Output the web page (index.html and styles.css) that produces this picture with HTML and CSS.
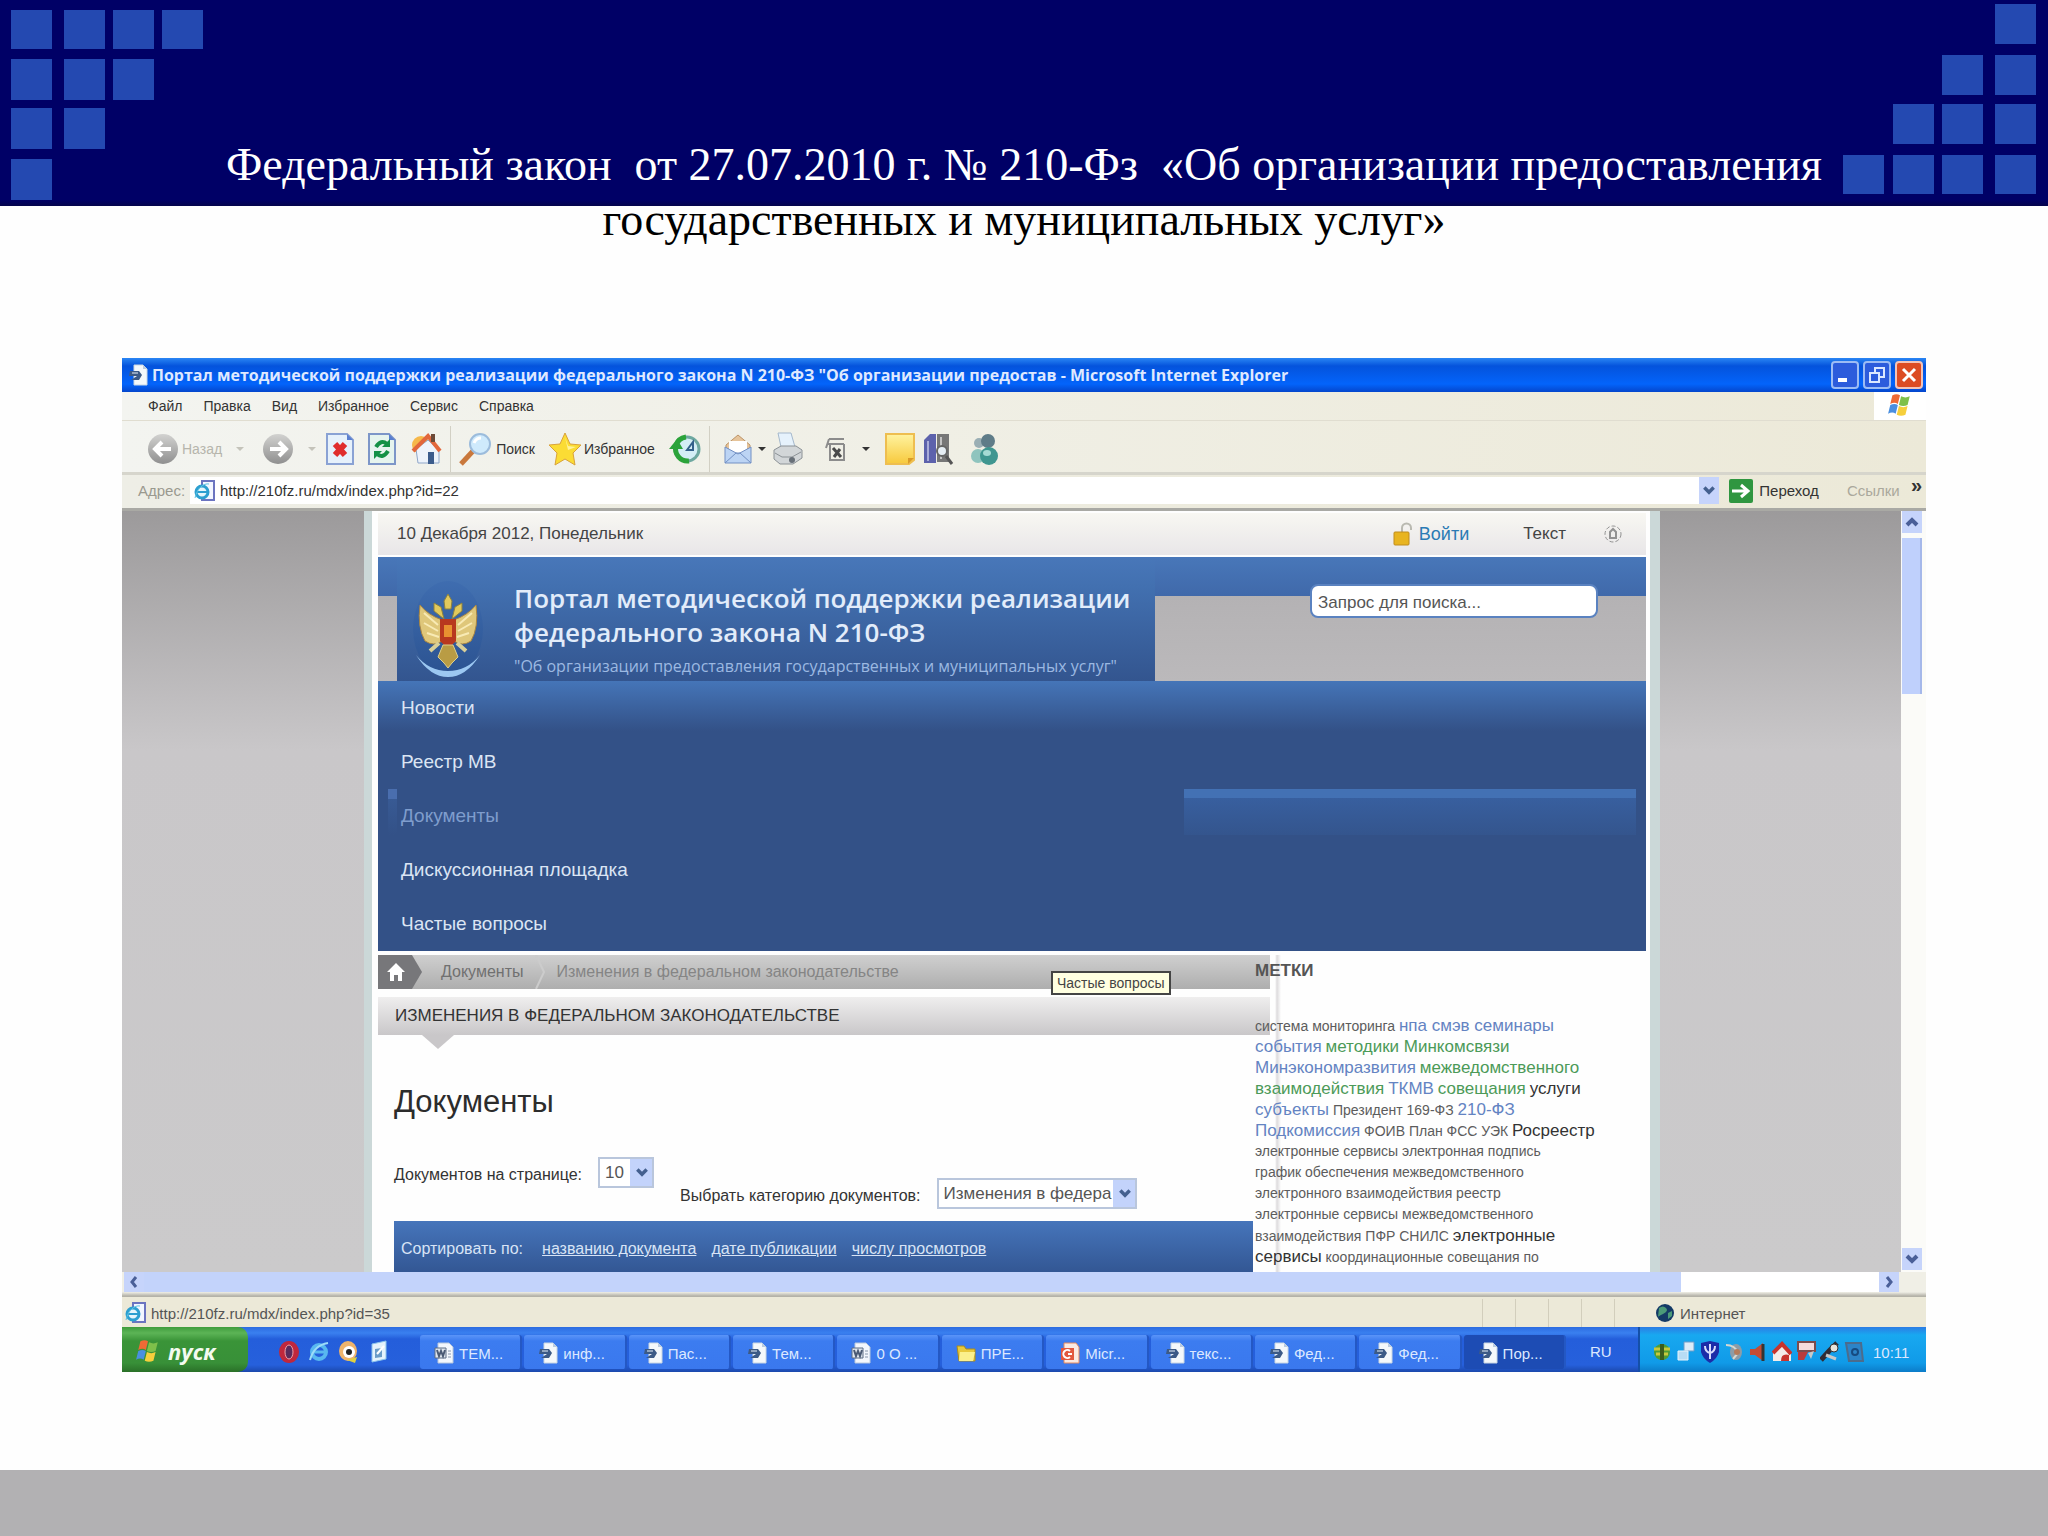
FILE: index.html
```html
<!DOCTYPE html>
<html lang="ru">
<head>
<meta charset="utf-8">
<title>Федеральный закон от 27.07.2010 г. № 210-Фз</title>
<link rel="stylesheet" href="styles.css">
</head>
<body>
<svg class="defs" width="0" height="0" aria-hidden="true">
  <defs>
    <linearGradient id="gloss" x1="0" y1="0" x2="0" y2="1"><stop offset="0" stop-color="#d2d2d0"/><stop offset="1" stop-color="#8f8f8f"/></linearGradient>
    <linearGradient id="noteFill" x1="0" y1="0" x2="0" y2="1"><stop offset="0" stop-color="#fff3a0"/><stop offset="1" stop-color="#f7c93c"/></linearGradient>
    <linearGradient id="sphere" x1="0" y1="0" x2="0" y2="1"><stop offset="0" stop-color="#3f6db0"/><stop offset="1" stop-color="#2b5290"/></linearGradient>
    <symbol id="ie-doc" viewBox="0 0 20 22"><path d="M6 1h9l4 4v16H6z" fill="#f4f8fb" stroke="#c9d6e2"/><path d="M15 1v4h4" fill="#b9cbe0"/><path d="M2 7l9 0 3 4-3 5H3l6-4H1z" fill="#3c5a86"/><path d="M4 9h6" stroke="#e4eef8" stroke-width="1"/></symbol>
    <symbol id="ie-page" viewBox="0 0 22 22"><path d="M8 1h12v19H8z" fill="#f2f6ff" stroke="#6b74c0" stroke-width="2"/><circle cx="8" cy="12" r="6" fill="#e6f6fc" stroke="#2c9fd0" stroke-width="3"/><path d="M3 12h10" stroke="#2c9fd0" stroke-width="2"/><path d="M1 18C3 8 10 3 15 4" fill="none" stroke="#5fc4e4" stroke-width="1"/></symbol>
    <symbol id="word" viewBox="0 0 20 22"><path d="M4 1h11l4 4v16H4z" fill="#f3f7fd" stroke="#b9c8dc"/><path d="M1 6h11v10H1z" fill="#dfe6ee" stroke="#5c6c84"/><path d="M3 8l2 6 2-5 2 5 2-6" fill="none" stroke="#4a5a74" stroke-width="2"/><path d="M14 9h3M14 12h3M14 15h3" stroke="#8695aa"/></symbol>
    <symbol id="folder" viewBox="0 0 20 22"><path d="M1 4h7l2 3h9v12H3z" fill="#e8c93c" stroke="#a98c1c"/><path d="M4 10h15l-2 9H3z" fill="#fbf08c"/></symbol>
    <symbol id="ppt" viewBox="0 0 20 22"><path d="M4 1h12l3 4v16H4z" fill="#fbe9e2" stroke="#e3895f"/><path d="M1 6h13v12H1z" fill="#e2583f"/><path d="M10 9a4 4 0 1 0 0 6M8 12h4" fill="none" stroke="#fff" stroke-width="2"/></symbol>
    <symbol id="flag" viewBox="0 0 24 24"><path d="M5 3q4-2 7 0l-2 8q-3-2-7 0z" fill="#ee6a35"/><path d="M13 4q4 2 8 0l-2 8q-4 2-8 0z" fill="#7ec04a"/><path d="M3 12q4-2 7 0l-2 8q-3-2-7 0z" fill="#4a8fe0"/><path d="M11 13q4 2 8 0l-2 8q-4 2-8 0z" fill="#f6cf3c"/></symbol>
    <symbol id="down" viewBox="0 0 12 12"><path d="M2 3l4 4 4-4" fill="none" stroke="#44608f" stroke-width="3"/></symbol>
  </defs>
</svg>

<header class="slide-head">
  <svg class="squares squares-left" width="204" height="206" fill="#2449b1" aria-hidden="true">
    <path d="M11 10h41v39H11zM64 10h41v39H64zM113 10h41v39H113zM162 10h41v39H162zM11 59h41v41H11zM64 59h41v41H64zM113 59h41v41H113zM11 108h41v41H11zM64 108h41v41H64zM11 159h41v41H11z"/>
  </svg>
  <svg class="squares squares-right" width="206" height="206" fill="#2449b1" aria-hidden="true">
    <path d="M153 4h41v40h-41zM100 55h41v40h-41zM153 55h41v40h-41zM51 104h41v40H51zM100 104h41v40h-41zM153 104h41v40h-41zM1 155h41v39H1zM51 155h41v39H51zM100 155h41v39h-41zM153 155h41v39h-41z"/>
  </svg>
  <h1><span class="line-light">Федеральный закон&nbsp; от 27.07.2010 г. № 210-Фз&nbsp; «Об организации предоставления</span> <span class="line-dark">государственных и муниципальных услуг»</span></h1>
</header>

<main class="slide-body">
<div class="window">
  <div class="titlebar">
    <svg width="20" height="22"><use href="#ie-doc"/></svg>
    <span class="title-text">Портал методической поддержки реализации федерального закона N 210-ФЗ "Об организации предостав - Microsoft Internet Explorer</span>
    <button class="wbtn" type="button" aria-label="Свернуть"><svg width="24" height="24"><path d="M5 17h9" stroke="#fff" stroke-width="4"/></svg></button>
    <button class="wbtn" type="button" aria-label="Восстановить"><svg width="24" height="24" fill="none" stroke="#dbe8ff" stroke-width="2"><path d="M10 9V5h9v9h-4"/><path d="M5 10h9v9H5z"/></svg></button>
    <button class="wbtn close" type="button" aria-label="Закрыть"><svg width="24" height="24"><path d="M6 6l12 12M18 6L6 18" stroke="#fff" stroke-width="3"/></svg></button>
  </div>

  <nav class="menubar">
    <a href="#">Файл</a><a href="#">Правка</a><a href="#">Вид</a><a href="#">Избранное</a><a href="#">Сервис</a><a href="#">Справка</a>
    <span class="throbber"><svg width="28" height="26"><use href="#flag"/></svg></span>
  </nav>

  <div class="toolbar">
    <button class="tool muted" type="button"><svg width="32" height="32"><circle cx="16" cy="16" r="15" fill="url(#gloss)"/><path d="M24 16H9M15 9l-7 7 7 7" fill="none" stroke="#fff" stroke-width="4"/></svg>Назад</button>
    <span class="caret pale"></span>
    <button class="tool fwd" type="button" aria-label="Вперед"><svg width="32" height="32"><circle cx="16" cy="16" r="15" fill="url(#gloss)"/><path d="M8 16h15M17 9l7 7-7 7" fill="none" stroke="#fff" stroke-width="4"/></svg></button>
    <span class="caret pale"></span>
    <button class="tool stop" type="button" aria-label="Остановить"><svg width="28" height="32"><path d="M1 1h20l6 6v24H1z" fill="#e6f1fb" stroke="#8aa2d4" stroke-width="2"/><path d="M21 1v6h6z" fill="#5a7fd0"/><path d="M9 11l10 11M19 11L9 22" stroke="#e02d2d" stroke-width="6"/></svg></button>
    <button class="tool" type="button" aria-label="Обновить"><svg width="28" height="32"><path d="M1 1h20l6 6v24H1z" fill="#e6f4ee" stroke="#7d96c8" stroke-width="2"/><path d="M21 1v6h6z" fill="#5a7fd0"/><path d="M8 14q5-8 11-3M20 18q-5 8-11 3" fill="none" stroke="#149146" stroke-width="4"/><path d="M14 14h8V6zM14 18H6v8z" fill="#149146"/></svg></button>
    <button class="tool" type="button" aria-label="Домой"><svg width="32" height="34"><circle cx="11" cy="13" r="9" fill="#f6b84a"/><path d="M6 17l12-9 11 10v13H8z" fill="#eef3fb" stroke="#8fa6c9"/><path d="M3 19L18 4l12 15" fill="none" stroke="#e2673c" stroke-width="4"/><path d="M21 2h4v8h-4z" fill="#6c4a38"/><path d="M18 20h6v12h-6z" fill="#3c5c8c"/></svg></button>
    <span class="rule"></span>
    <button class="tool" type="button"><svg width="34" height="34"><path d="M2 32L14 19" stroke="#c9783c" stroke-width="5"/><circle cx="21" cy="12" r="10" fill="#cfeafc" stroke="#9cbcdc" stroke-width="2"/><path d="M15 11q2-5 7-5" stroke="#fff" stroke-width="3" fill="none"/></svg>Поиск</button>
    <button class="tool" type="button"><svg width="32" height="34"><path d="M16 1l5 11 11 1-8 8 2 12-10-6-10 6 2-12-8-8 11-1z" fill="#fbdc34" stroke="#d9a23a"/><path d="M16 5l3 9 8 1-8 3z" fill="#fff39a"/></svg>Избранное</button>
    <button class="tool" type="button" aria-label="Журнал"><svg width="32" height="32"><circle cx="18" cy="16" r="12" fill="#d4eef6" stroke="#6ea8a0" stroke-width="3"/><path d="M18 17l6-8v8z" fill="none" stroke="#33618c" stroke-width="2"/><path d="M20 28A12 12 0 0 1 7 13Q9 5 17 4" fill="none" stroke="#2ba33a" stroke-width="5"/><path d="M0 16L8 6l6 10z" fill="#2ba33a"/></svg></button>
    <span class="rule"></span>
    <button class="tool mail" type="button" aria-label="Почта"><svg width="32" height="32"><path d="M4 12L16 2l12 10v4H4z" fill="#e6c49a" stroke="#bd9468"/><path d="M7 8h18v12H7z" fill="#fff"/><path d="M3 14l13 7 13-7v16H3z" fill="#bcd4f4" stroke="#7290c4"/><path d="M3 30l11-10h4l11 10" fill="none" stroke="#7290c4"/></svg></button>
    <span class="caret near"></span>
    <button class="tool print" type="button" aria-label="Печать"><svg width="32" height="34"><path d="M6 1h13l4 14H9z" fill="#e6f2fc" stroke="#a5b8cc"/><path d="M2 18l7-4h15l6 4v8l-9 6H8l-6-5z" fill="#d2d6d8" stroke="#8c9296"/><path d="M3 21l7 4h10l9-5" fill="none" stroke="#8c9296"/><circle cx="20" cy="28" r="3" fill="#687078"/></svg></button>
    <button class="tool edit" type="button" aria-label="Правка"><svg width="24" height="26"><path d="M5 3h15M3 8h17M5 3L2 12M6 8v16h14V8" fill="none" stroke="#8c8c8c" stroke-width="2"/><path d="M10 21l6-8M9 12l8 9" stroke="#4a4a4a" stroke-width="3"/></svg></button>
    <span class="caret"></span>
    <button class="tool" type="button" aria-label="Заметка"><svg width="32" height="34"><path d="M2 2h28v26l-5 4H2z" fill="url(#noteFill)" stroke="#eebe50" stroke-width="2"/><path d="M30 26h-6v6z" fill="#d99b28"/></svg></button>
    <button class="tool books" type="button" aria-label="Справочные материалы"><svg width="32" height="34"><path d="M1 8l6-6h6v29H1z" fill="#5d62ac"/><path d="M4 9h2v20H4z" fill="#a9acd8"/><path d="M14 2h12v28H14z" fill="#777"/><path d="M17 5h2v22h-2z" fill="#c4c4c4"/><circle cx="19" cy="19" r="5" fill="#e6eef4" stroke="#666" stroke-width="2"/><path d="M23 24l6 8" stroke="#555" stroke-width="3"/></svg></button>
    <button class="tool" type="button" aria-label="Messenger"><svg width="32" height="34"><circle cx="10" cy="11" r="5" fill="#9aaeb4"/><ellipse cx="9" cy="24" rx="7" ry="7" fill="#8fc4be"/><circle cx="19" cy="9" r="7" fill="#5f7c88"/><ellipse cx="20" cy="24" rx="9" ry="9" fill="#3f9690"/><ellipse cx="18" cy="21" rx="4" ry="3" fill="#a5dad4"/></svg></button>
  </div>

  <div class="addressbar">
    <label for="addr">Адрес:</label>
    <div class="addr-field">
      <svg width="22" height="22"><use href="#ie-page"/></svg>
      <input id="addr" type="text" value="http://210fz.ru/mdx/index.php?id=22">
      <button type="button" class="drop" aria-label="Показать адреса"><svg width="14" height="14"><use href="#down"/></svg></button>
    </div>
    <button class="go" type="button"><svg width="24" height="24"><rect width="24" height="24" rx="2" fill="#2f9640"/><path d="M3 12h14M12 6l7 6-7 6" fill="none" stroke="#fff" stroke-width="3"/></svg>Переход</button>
    <a class="links" href="#">Ссылки</a>
    <span class="more">»</span>
  </div>

  <div class="view">
    <div class="page-area">
      <div class="site">
        <div class="datebar">
          <span class="date">10 Декабря 2012, Понедельник</span>
          <a class="login" href="#"><svg width="20" height="24"><path d="M9 11V6a4 4 0 0 1 9 0v2" fill="none" stroke="#b9b9b0" stroke-width="2"/><rect x="1" y="10" width="15" height="13" rx="1" fill="#e8b420" stroke="#c08c1c"/></svg>Войти</a>
          <a class="textver" href="#">Текст</a>
          <svg width="18" height="20" fill="none" stroke="#929292"><circle cx="9" cy="10" r="8" stroke-dasharray="4 2"/><path d="M6 14V8l3-3 3 3v6z" stroke-width="2"/></svg>
        </div>
        <div class="banner">
          <div class="brand">
            <svg class="emblem" width="72" height="104" viewBox="0 0 72 104">
              <ellipse cx="36" cy="52" rx="35" ry="48" fill="url(#sphere)"/>
              <path d="M4 78q14 22 32 22t32-22q-13 16-32 16T4 78z" fill="#9cc8f2"/>
              <path d="M30 43Q16 38 8 28q-3 22 5 36 9 6 17 0zM42 43q14-5 22-15 3 22-5 36-9 6-17 0z" fill="#dfc77a" stroke="#a98642"/>
              <path d="M12 36l14 12M12 46l14 8M15 56l12 4M60 36L46 48M60 46l-14 8M57 56l-12 4" stroke="#f8eab4" stroke-width="2"/>
              <path d="M22 26l7 4 3 12-10-8zM50 26l-7 4-3 12 10-8zM32 24l4-7 4 7-1 8h-6z" fill="#e2c95c" stroke="#8c8240"/>
              <path d="M28 42h16v22l-8 8-8-8z" fill="#b8381f"/>
              <path d="M32 48h8v12h-8z" fill="#e89030"/>
              <path d="M27 66l-9 8M45 66l9 8" stroke="#d8cf98" stroke-width="4"/>
              <path d="M31 68h10l5 12-6 6-4 5-4-5-6-6z" fill="#b99c44" stroke="#dfd08a"/>
            </svg>
            <div class="brand-text">
              <h2>Портал методической поддержки реализации<br>федерального закона N 210-ФЗ</h2>
              <p>"Об организации предоставления государственных и муниципальных услуг"</p>
            </div>
          </div>
          <input class="search" type="text" aria-label="Поиск" value="Запрос для поиска...">
        </div>
        <nav class="sitenav">
          <a href="#">Новости</a>
          <a href="#">Реестр МВ</a>
          <a href="#" class="current">Документы</a>
          <a href="#">Дискуссионная площадка</a>
          <a href="#">Частые вопросы</a>
        </nav>
        <div class="columns">
          <section class="content">
            <div class="crumbs">
              <a class="home" href="#" aria-label="Главная"><svg width="44" height="34"><path d="M0 0h34l10 17-10 17H0z" fill="#77777a"/><path d="M18 8l-9 9h3v9h4v-6h4v6h4v-9h3z" fill="#fff"/></svg></a>
              <a href="#">Документы</a>
              <svg width="12" height="34"><path d="M2 0l8 17-8 17" fill="none" stroke="#cccccc" stroke-width="2"/></svg>
              <span class="here">Изменения в федеральном законодательстве</span>
              <span class="tip" role="tooltip">Частые вопросы</span>
            </div>
            <h3>ИЗМЕНЕНИЯ В ФЕДЕРАЛЬНОМ ЗАКОНОДАТЕЛЬСТВЕ</h3>
            <svg class="notch" width="32" height="14"><path d="M0 0h32L16 14z" fill="#c9c7c9"/></svg>
            <h4>Документы</h4>
            <form class="filters">
              <div class="filter"><label for="per">Документов на странице:</label>
                <span class="pick small"><select id="per"><option>10</option></select><svg width="14" height="14"><use href="#down"/></svg></span></div>
              <div class="filter second"><label for="cat">Выбрать категорию документов:</label>
                <span class="pick"><select id="cat"><option>Изменения в федера</option></select><svg width="14" height="14"><use href="#down"/></svg></span></div>
            </form>
            <div class="sortbar"><span>Сортировать по:</span><a href="#">названию документа</a><a href="#">дате публикации</a><a href="#">числу просмотров</a></div>
          </section>
          <aside class="tags">
            <h5>МЕТКИ</h5>
            <p><a href="#">система мониторинга</a> <a href="#" class="b">нпа смэв семинары</a></p>
            <p><a href="#" class="b">события</a> <a href="#" class="g">методики Минкомсвязи</a></p>
            <p><a href="#" class="b">Минэкономразвития</a> <a href="#" class="g">межведомственного</a></p>
            <p><a href="#" class="g">взаимодействия</a> <a href="#" class="b">ТКМВ</a> <a href="#" class="g">совещания</a> <a href="#" class="k">услуги</a></p>
            <p><a href="#" class="b">субъекты</a> <a href="#">Президент 169-ФЗ</a> <a href="#" class="b">210-ФЗ</a></p>
            <p><a href="#" class="b">Подкомиссия</a> <a href="#">ФОИВ План ФСС УЭК</a> <a href="#" class="k">Росреестр</a></p>
            <p><a href="#">электронные сервисы электронная подпись</a></p>
            <p><a href="#">график обеспечения межведомственного</a></p>
            <p><a href="#">электронного взаимодействия реестр</a></p>
            <p><a href="#">электронные сервисы межведомственного</a></p>
            <p><a href="#">взаимодействия ПФР СНИЛС</a> <a href="#" class="k">электронные</a></p>
            <p><a href="#" class="k">сервисы</a> <a href="#">координационные совещания по</a></p>
          </aside>
        </div>
      </div>
    </div>
    <div class="vscroll">
      <button type="button" class="sbtn" aria-label="Вверх"><svg width="16" height="16"><path d="M3 11l5-5 5 5" fill="none" stroke="#4a5f98" stroke-width="4"/></svg></button>
      <div class="vthumb"></div>
      <button type="button" class="sbtn" aria-label="Вниз"><svg width="16" height="16"><path d="M3 5l5 5 5-5" fill="none" stroke="#4a5f98" stroke-width="4"/></svg></button>
    </div>
  </div>
  <div class="hscroll">
    <button type="button" class="sbtn" aria-label="Влево"><svg width="16" height="16"><path d="M10 3L6 8l4 5" fill="none" stroke="#4a5f98" stroke-width="3"/></svg></button>
    <div class="hthumb"></div>
    <div class="htrack"></div>
    <button type="button" class="sbtn" aria-label="Вправо"><svg width="16" height="16"><path d="M6 3l4 5-4 5" fill="none" stroke="#4a5f98" stroke-width="3"/></svg></button>
  </div>
  <div class="statusbar">
    <svg width="22" height="22"><use href="#ie-page"/></svg>
    <span class="status-url">http://210fz.ru/mdx/index.php?id=35</span>
    <span class="cells"><i></i><i></i><i></i><i></i><i></i></span>
    <span class="zone"><svg width="20" height="20"><circle cx="10" cy="10" r="9" fill="#143a66"/><path d="M4 5q4-3 7 0t-3 6-5 3zM13 10l4-2v5l-4 3z" fill="#4c9a78"/></svg>Интернет</span>
  </div>

  <div class="taskbar">
    <button class="start" type="button"><svg width="26" height="28" viewBox="0 0 24 24"><use href="#flag"/></svg>пуск</button>
    <div class="quick">
      <svg width="22" height="24"><ellipse cx="11" cy="12" rx="10" ry="11" fill="#c0273c"/><ellipse cx="11" cy="12" rx="4" ry="7" fill="#5a2a5c" stroke="#f0a0a8"/></svg>
      <svg width="22" height="24"><circle cx="11" cy="12" r="7" fill="none" stroke="#58b8f0" stroke-width="4"/><path d="M5 12h12" stroke="#58b8f0" stroke-width="3"/><path d="M2 20Q6 5 20 3" fill="none" stroke="#9cdcf8" stroke-width="2"/></svg>
      <svg width="22" height="24"><ellipse cx="10" cy="11" rx="9" ry="10" fill="#efb46c"/><circle cx="11" cy="12" r="6" fill="#fff"/><circle cx="11" cy="12" r="3" fill="#222"/><path d="M9 20l8 3 2-6z" fill="#e0d040"/></svg>
      <svg width="22" height="24"><path d="M4 4l14-3v18L4 22z" fill="#e4f2fc" stroke="#8cc4ec"/><path d="M7 9l7-1v9l-7 1z" fill="#6a9cc8"/><path d="M9 14l7-8" stroke="#fff" stroke-width="2"/></svg>
    </div>
    <div class="tasks">
      <button type="button"><svg width="20" height="22"><use href="#word"/></svg>ТЕМ...</button>
      <button type="button"><svg width="20" height="22"><use href="#ie-doc"/></svg>инф...</button>
      <button type="button"><svg width="20" height="22"><use href="#ie-doc"/></svg>Пас...</button>
      <button type="button"><svg width="20" height="22"><use href="#ie-doc"/></svg>Тем...</button>
      <button type="button"><svg width="20" height="22"><use href="#word"/></svg>0 О ...</button>
      <button type="button"><svg width="20" height="22"><use href="#folder"/></svg>ПРЕ...</button>
      <button type="button"><svg width="20" height="22"><use href="#ppt"/></svg>Micr...</button>
      <button type="button"><svg width="20" height="22"><use href="#ie-doc"/></svg>текс...</button>
      <button type="button"><svg width="20" height="22"><use href="#ie-doc"/></svg>Фед...</button>
      <button type="button"><svg width="20" height="22"><use href="#ie-doc"/></svg>Фед...</button>
      <button type="button" class="active"><svg width="20" height="22"><use href="#ie-doc"/></svg>Пор...</button>
    </div>
    <span class="lang">RU</span>
    <div class="tray">
      <svg width="20" height="24"><circle cx="10" cy="12" r="8" fill="#4f9c34"/><path d="M2 9h16M4 14h12" stroke="#c8c83c" stroke-width="3"/><path d="M10 4v16" stroke="#3c5c1c" stroke-width="4"/></svg>
      <svg width="20" height="24"><path d="M8 2h10v9H8z" fill="#dcecf8" stroke="#6c9cc8"/><path d="M2 11h10v9H2z" fill="#b8dcf4" stroke="#e8f4fc"/></svg>
      <svg width="20" height="24"><path d="M1 3l9-2 9 2v9q-2 7-9 11-7-4-9-11z" fill="#1c2ca8"/><path d="M10 4v15M5 6q0 6 5 7 5-1 5-7" fill="none" stroke="#d8dcfc" stroke-width="2"/></svg>
      <svg width="20" height="24"><ellipse cx="12" cy="12" rx="6" ry="8" fill="#8c9ca8"/><path d="M2 5q9 0 12 8l-5 6" fill="none" stroke="#d8d8d0" stroke-width="2"/><circle cx="13" cy="12" r="3" fill="#b47c5c"/></svg>
      <svg width="20" height="24"><path d="M2 9h5l8-6v18l-8-6H2z" fill="#c44c34"/><path d="M15 4v17" stroke="#343434" stroke-width="3"/></svg>
      <svg width="20" height="24"><path d="M1 21V12L10 3l9 9v9z" fill="#f4ece8"/><path d="M1 13l9-9 9 10" fill="none" stroke="#c8342c" stroke-width="4"/><path d="M9 21q0-8 8-6v6z" fill="#c8342c"/></svg>
      <svg width="20" height="24"><path d="M2 2h17v9H2z" fill="#f4dcdc" stroke="#7c4c4c" stroke-width="2"/><path d="M2 12h10l-4 8H2z" fill="#b83c3c"/><path d="M12 13l6-2-3 8z" fill="#c8c8c8"/></svg>
      <svg width="20" height="24"><path d="M1 20l8-9 8-8" stroke="#302c34" stroke-width="5"/><circle cx="14" cy="8" r="4" fill="#e8e4dc" stroke="#333"/><path d="M6 15l10 4" stroke="#c8c8c8" stroke-width="3"/></svg>
      <svg width="20" height="24"><path d="M2 3h15l2 18H5z" fill="#2c84c8" stroke="#4c6c8c" stroke-width="2"/><circle cx="11" cy="12" r="3" fill="none" stroke="#164a80" stroke-width="2"/></svg>
      <time>10:11</time>
    </div>
  </div>
</div>
</main>
<footer class="slide-foot"></footer>
</body>
</html>
```
FILE: styles.css
```css
* { box-sizing: border-box; }
body {
  margin: 0;
  min-height: 100vh;
  display: flex;
  flex-direction: column;
  background: #fefefe;
  font-family: "Liberation Sans", Arial, sans-serif;
  font-size: 16px;
  color: #333;
}
.defs { position: absolute; }
a { color: inherit; text-decoration: none; }
button, input, select { font: inherit; color: inherit; border: 0; padding: 0; margin: 0; background: none; }
h1, h2, h3, h4, h5, p { margin: 0; font-weight: normal; }
svg { flex: none; display: block; }

.slide-head {
  position: relative;
  padding: 137px 0 111px;
  background: linear-gradient(#000066 0 200px, #04044c 206px, #fefefe 206px);
}
.squares { position: absolute; top: 0; }
.squares-left { left: 0; }
.squares-right { right: 0; }
h1 {
  position: relative;
  text-align: center;
  font: 46px/55px "Liberation Serif", "Times New Roman", serif;
}
h1 span { display: block; }
.line-light { color: #fff; }
.line-dark { color: #000; }

.slide-body { flex: 1; padding: 0 122px 98px; }
.slide-foot { height: 66px; background: #b2b1b3; }

.window { background: #ece9d8; }

.titlebar {
  display: flex;
  align-items: center;
  gap: 4px;
  height: 34px;
  padding: 0 3px 0 6px;
  background: linear-gradient(#2a86f4, #0453dc 8px, #0364fb 26px, #0446cc);
  color: #dfe9ff;
}
.title-text { flex: 1; font: bold 16px/24px "Open Sans", "Noto Sans", sans-serif; white-space: nowrap; overflow: hidden; }
.wbtn { width: 28px; height: 28px; border: 2px solid #9cbcf4; border-radius: 4px; background: #2c5cdc; }
.wbtn.close { background: #dc4c24; border-color: #f4c4b8; }

.menubar {
  display: flex;
  align-items: center;
  gap: 21px;
  height: 29px;
  padding-left: 26px;
  background: linear-gradient(90deg, #f3f4f0, #ece9d8);
  border-bottom: 1px solid #e0ddd0;
  font-size: 14px;
}
.throbber { margin-left: auto; align-self: stretch; width: 52px; padding-left: 12px; background: #fff; }

.toolbar {
  display: flex;
  align-items: center;
  gap: 14px;
  height: 54px;
  padding: 4px 0 0 25px;
  background: linear-gradient(90deg, #f3f4f0, #ece9d8);
  border-bottom: 3px solid #d6d5cc;
  font-size: 14px;
}
.tool { display: flex; align-items: center; gap: 3px; }
.tool.muted { color: #b6b5ac; }
.fwd { margin-left: 4px; }
.stop { margin-left: -4px; }
.mail { margin-left: 4px; }
.print { margin-left: -8px; }
.edit { margin-left: 6px; }
.books { margin-left: -7px; }
.rule { width: 1px; height: 46px; margin: 0 -6px; background: #d2d0c4; }
.caret { border: 4px solid transparent; border-top-color: #333; border-bottom-width: 0; }
.caret.pale { border-top-color: #c4c3ba; }
.caret.near { margin-left: -10px; }

.addressbar {
  display: flex;
  align-items: center;
  height: 36px;
  padding: 0 4px 2px 16px;
  background: linear-gradient(90deg, #eeeee6, #ece9d8);
  border-bottom: 3px solid #a9a9a4;
  font-size: 15px;
}
.addressbar label { width: 52px; color: #9a998f; }
.addr-field { display: flex; flex: 1; align-items: center; gap: 4px; height: 27px; padding-left: 4px; background: #fff; }
.addr-field input { flex: 1; min-width: 0; }
.drop { display: grid; place-items: center; width: 20px; height: 27px; background: #c6d4fb; }
.go { display: flex; align-items: center; gap: 6px; margin-left: 10px; }
.links { width: 64px; margin-left: 28px; color: #aaa89c; }
.more { align-self: flex-start; font-size: 20px; font-weight: bold; line-height: 20px; }

.view { display: flex; height: 761px; overflow: hidden; }
.page-area {
  flex: 1;
  padding: 0 241px 0 242px;
  background: linear-gradient(#9c9a9b, #c9c7c9 240px, #cbcacb);
}
.site { border: solid #cbd8d8; border-width: 0 10px 0 8px; padding: 2px 4px 0 6px; background: #fefefe; }
.datebar {
  display: flex;
  align-items: center;
  height: 42px;
  padding: 0 24px 0 19px;
  background: linear-gradient(#f8f7f2, #e8e6e8);
  font-size: 17px;
  color: #444;
}
.date { flex: 1; }
.login { display: flex; align-items: center; gap: 6px; color: #2a7bb4; font-size: 18px; }
.textver { margin: 0 38px 0 54px; }
.banner {
  display: flex;
  justify-content: space-between;
  align-items: flex-start;
  height: 124px;
  margin-top: 2px;
  padding: 0 48px 0 19px;
  background: linear-gradient(#4877b9, #4069aa 39px, #b4b2b4 39px, #bbb9bb);
}
.brand { display: flex; height: 124px; width: 758px; padding-left: 15px; background: linear-gradient(#4877b9, #4270b0 30px, #33558f); }
.emblem { margin-top: 20px; }
.brand-text { padding: 24px 0 0 30px; color: #e2ecfa; white-space: nowrap; }
h2 { font: 600 26px/34px "Open Sans", "Noto Sans", sans-serif; }
.brand-text p { font: 16px/34px "Open Sans", "Noto Sans", sans-serif; color: #9cb9e2; }
.search {
  width: 288px;
  height: 34px;
  margin-top: 27px;
  padding: 4px 6px 0;
  border: 2px solid #5a82c0;
  border-radius: 8px;
  background: #fff;
  font-size: 17px;
  color: #555;
}
.sitenav { display: flex; flex-direction: column; background: linear-gradient(#4575b8, #335187 50px); color: #dbe5f4; }
.sitenav a { padding: 0 23px; font-size: 19px; line-height: 54px; }
.sitenav .current {
  margin: 0 10px;
  padding: 0 13px;
  color: #7f9dcd;
  background:
    linear-gradient(#4371b4 0 9px, #385f9f 9px, #34558d 46px, transparent 46px) right / 452px 100% no-repeat,
    linear-gradient(#4a6eae 0 10px, #385a94 10px, #335187 46px) left top / 9px 46px no-repeat;
}
.columns { display: flex; padding-top: 4px; }
.content { flex: 1; }
.crumbs {
  position: relative;
  display: flex;
  align-items: center;
  height: 34px;
  margin-right: -17px;
  background: linear-gradient(#cfcfcf, #aeaeae);
  font-size: 16px;
  color: #707070;
}
.home { margin-right: 19px; }
.crumbs svg + .here { margin-left: 10px; color: #858585; }
.crumbs a + svg { margin-left: 11px; }
.tip {
  position: absolute;
  left: 673px;
  top: 16px;
  padding: 0 4px;
  border: 2px solid #444;
  background: #ffffe1;
  font-size: 14px;
  line-height: 20px;
  color: #444;
}
h3 {
  margin: 8px -17px 0 0;
  padding-left: 17px;
  background: linear-gradient(#efeeee, #c9c7c9);
  font-size: 17px;
  line-height: 38px;
  color: #333;
}
.notch { margin-left: 44px; }
h4 { padding: 33px 0 0 16px; font-size: 31px; line-height: 40px; color: #2c2c2c; }
.filters { display: flex; align-items: flex-start; gap: 26px; padding: 35px 0 0 16px; }
.filter { display: flex; align-items: center; gap: 16px; font-size: 16px; }
.filter label { padding-top: 5px; }
.filter.second { margin-top: 21px; }
.pick { display: flex; align-items: center; width: 200px; height: 31px; padding-right: 3px; border: 2px solid #b9c6dc; background: linear-gradient(#c3d3fb, #c3d3fb) right / 22px 100% no-repeat #fff; }
.pick.small { width: 56px; }
.pick select { flex: 1; min-width: 0; padding-left: 5px; appearance: none; font-size: 17px; color: #555; }
.sortbar {
  display: flex;
  gap: 15px;
  margin: 12px 0 0 16px;
  padding-left: 7px;
  background: linear-gradient(#4675bb, #315490);
  color: #d8e4f6;
  font-size: 16px;
  line-height: 56px;
}
.sortbar span { margin-right: 4px; }
.sortbar a { text-decoration: underline; }
.tags {
  position: relative;
  width: 393px;
  padding-left: 2px;
  white-space: nowrap;
  background: linear-gradient(90deg, transparent 22px, #dddbdd 24px, transparent 28px);
  color: #5c5c5c;
  font-size: 14px;
}
h5 { padding-bottom: 28px; font-size: 17px; font-weight: bold; line-height: 32px; color: #555; }
.tags p { height: 21px; line-height: 21px; }
.tags .b { font-size: 17px; color: #6383c2; }
.tags .g { font-size: 17px; color: #4c9a58; }
.tags .k { font-size: 17px; color: #333; }

.sbtn { display: grid; place-items: center; background: #c6d4fb; }
.vscroll { display: flex; flex-direction: column; width: 25px; padding: 0 4px 2px 1px; background: #fbfbf8; }
.vscroll .sbtn { height: 22px; }
.vthumb { height: 156px; margin: 5px 0 auto; background: #bfd0fc; border-right: 2px solid #a5b8ea; }
.hscroll { display: flex; height: 25px; padding: 0 27px 5px 2px; background: linear-gradient(#f0efe6 0 20px, #b4b2a8 24px); }
.hscroll .sbtn { width: 20px; }
.hthumb { flex: 1; background: #c3d3fb; }
.htrack { width: 198px; background: #fff; }

.statusbar { display: flex; align-items: center; height: 30px; padding: 2px 0 0 3px; font-size: 15px; color: #555; }
.status-url { flex: 1; margin-left: 4px; }
.cells { display: flex; gap: 32px; height: 28px; margin-right: 40px; }
.cells i { width: 1px; background: #d2cebc; }
.zone { display: flex; align-items: center; gap: 5px; width: 271px; }

.taskbar { display: flex; height: 45px; background: linear-gradient(#2c6ce0, #3a80f0 6px, #245edb 12px, #2660dc 38px, #1b48ac); color: #dce8ff; font-size: 15px; }
.start {
  display: flex;
  align-items: center;
  gap: 7px;
  width: 126px;
  padding: 2px 0 0 13px;
  border-radius: 0 10px 10px 0;
  background: linear-gradient(#3f9c3c, #5cb456 6px, #3a9438 14px, #389038 36px, #2a7028);
  color: #f4fbf0;
  font: italic bold 22px/28px "Open Sans", "Noto Sans", sans-serif;
}
.quick { display: flex; align-items: center; gap: 8px; width: 172px; padding: 4px 0 0 30px; }
.tasks { display: flex; flex: 1; padding: 8px 0 3px; gap: 2px; }
.tasks button {
  flex: 1;
  display: flex;
  align-items: center;
  gap: 5px;
  padding: 2px 0 0 14px;
  border-radius: 3px;
  background: linear-gradient(#5a94f8, #3c7cf0 6px, #3a78ee);
  border-right: 2px solid #2458c4;
}
.tasks .active { background: #1d4cb4; }
.lang { width: 72px; padding-left: 24px; line-height: 50px; }
.tray { display: flex; align-items: center; gap: 4px; width: 288px; padding: 5px 0 0 12px; border-left: 2px solid #1450a8; background: linear-gradient(#2c7ce4, #18a8f0 8px, #109ae8 36px, #0c7cc8); }
.tray time { margin-left: 5px; }
```
